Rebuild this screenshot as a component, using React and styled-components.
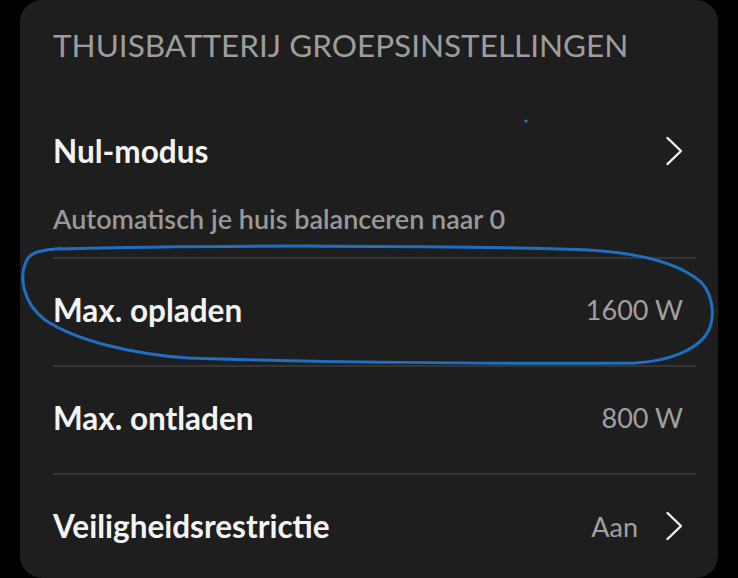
import React from "react";
import styled, { createGlobalStyle } from "styled-components";

const Global = createGlobalStyle`
  html, body {
    margin: 0;
    padding: 0;
    background: #000;
  }
  body {
    font-family: "Lato", "Noto Sans", sans-serif;
    -webkit-font-smoothing: antialiased;
  }
`;

const Page = styled.div`
  position: relative;
  width: 738px;
  height: 578px;
  overflow: hidden;
`;

const Card = styled.div`
  box-sizing: border-box;
  margin: 0 20px;
  height: 578px;
  padding: 0 22px 0 33px;
  background: #1e1e1e;
  border-radius: 22px;
`;

const Heading = styled.h2`
  box-sizing: border-box;
  margin: 0;
  height: 100px;
  padding-top: 26px;
  font-size: 31.5px;
  line-height: 38px;
  font-weight: 400;
  color: #9d9d9d;
`;

const Item = styled.div`
  box-sizing: border-box;
  border-top: ${(p) => (p.$first ? "none" : "2px solid #353535")};
  padding-bottom: ${(p) => (p.$sub ? "22px" : "0")};
`;

const Row = styled.div`
  box-sizing: border-box;
  display: flex;
  align-items: center;
  justify-content: space-between;
  height: ${(p) => p.$h || 105}px;
  padding: 0 13px 5px 0;
`;

const Label = styled.span`
  font-size: 31.5px;
  font-weight: 700;
  color: #f4f4f4;
`;

const Sub = styled.div`
  margin-top: -3px;
  font-size: 27px;
  line-height: 32px;
  font-weight: 600;
  color: #999;
`;

const Right = styled.div`
  display: flex;
  align-items: center;
  gap: 27px;
`;

const Value = styled.span`
  font-size: 27px;
  font-weight: 400;
  color: #a0a0a0;
`;

const Chevron = () => (
  <svg width="18" height="30" viewBox="0 0 18 30" fill="none">
    <polyline
      points="2.5,2 16,15 2.5,28"
      stroke="#f2f2f2"
      strokeWidth="2.4"
      strokeLinecap="round"
      strokeLinejoin="round"
    />
  </svg>
);

const Scribble = styled.svg`
  position: absolute;
  left: 0;
  top: 0;
  pointer-events: none;
`;

const rows = [
  { label: "Max. opladen", value: "1600 W", h: 106 },
  { label: "Max. ontladen", value: "800 W", h: 106 },
  { label: "Veiligheidsrestrictie", value: "Aan", arrow: true, h: 107 },
];

export default function App() {
  return (
    <Page>
      <Global />
      <Card>
        <Heading>THUISBATTERIJ GROEPSINSTELLINGEN</Heading>
        <Item $first $sub>
          <Row $h={106}>
            <Label>Nul-modus</Label>
            <Chevron />
          </Row>
          <Sub>Automatisch je huis balanceren naar 0</Sub>
        </Item>
        {rows.map((r) => (
          <Item key={r.label}>
            <Row $h={r.h}>
              <Label>{r.label}</Label>
              <Right>
                <Value>{r.value}</Value>
                {r.arrow && <Chevron />}
              </Right>
            </Row>
          </Item>
        ))}
      </Card>
      <Scribble width="738" height="578" viewBox="0 0 738 578">
        <path
          d="M 59 249 C 200 245, 450 245, 588 250 C 640 253, 680 264, 701 282 C 714 296, 716 320, 706 335 C 695 350, 670 361, 635 363 C 500 364, 300 362, 188 358 C 130 354, 75 340, 45 320 C 22 302, 18 275, 28 258 C 33 252, 42 250, 60 248.5"
          fill="none"
          stroke="#1d6fc3"
          strokeWidth="3"
          strokeLinecap="round"
          strokeLinejoin="round"
        />
        <circle cx="526" cy="121" r="1.6" fill="#2a7bd0" />
      </Scribble>
    </Page>
  );
}
